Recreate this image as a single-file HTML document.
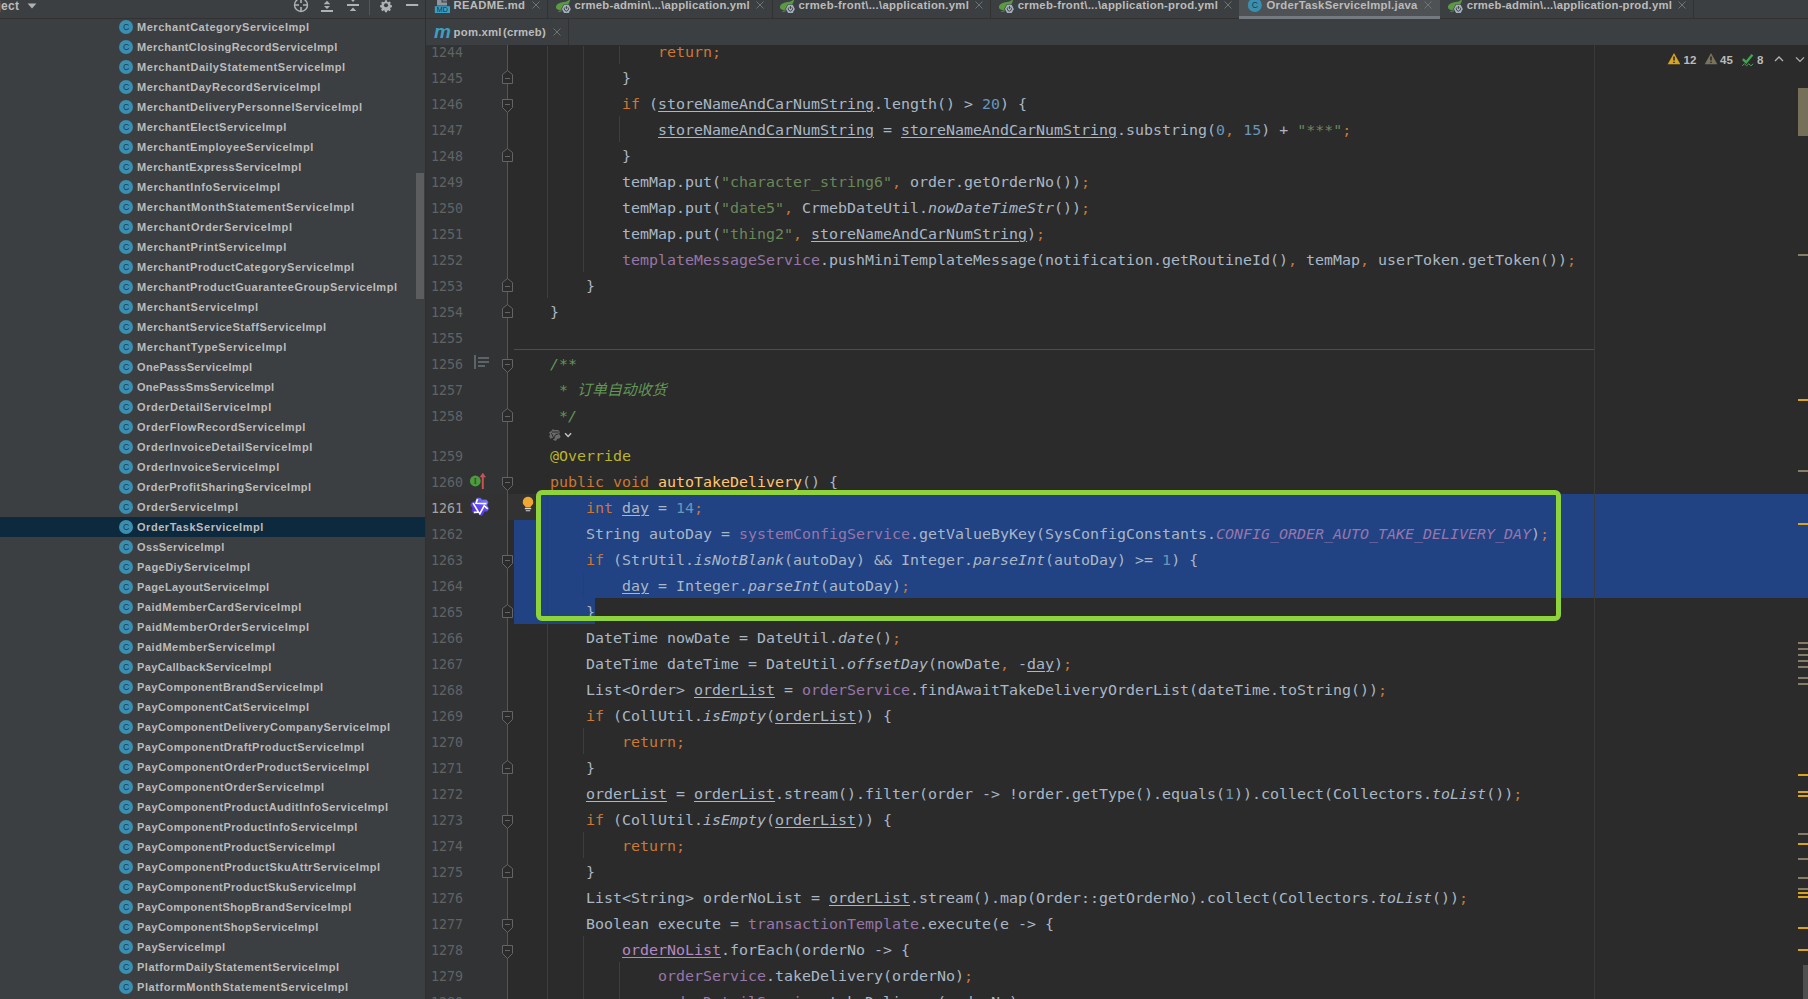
<!DOCTYPE html>
<html lang="zh">
<head>
<meta charset="utf-8">
<title>OrderTaskServiceImpl.java</title>
<style>
html,body{margin:0;padding:0;}
body{width:1808px;height:999px;overflow:hidden;position:relative;background:#2b2b2b;font-family:"Liberation Sans","Noto Sans CJK SC",sans-serif;}
.abs{position:absolute;}
#panel{position:absolute;left:0;top:0;width:425px;height:999px;background:#3c3f41;}
#phead{position:absolute;left:0;top:0;width:425px;height:18px;border-bottom:1px solid #323232;box-sizing:content-box;}
#tree .tr{position:absolute;left:0;width:425px;height:20px;}
#tree .tr.sel{background:#0d293e;}
#tree .ci{position:absolute;left:119px;top:3px;width:14px;height:14px;}
#tree .tn{position:absolute;left:137px;top:0;line-height:20px;font-size:11px;font-weight:bold;color:#bbbbbb;white-space:pre;letter-spacing:0px;}
#tabs1{position:absolute;left:425px;top:0;width:1383px;height:18px;background:#3c3f41;border-bottom:1px solid #323232;}
#tabs2{position:absolute;left:425px;top:19px;width:1383px;height:26px;background:#3c3f41;}
.tab{position:absolute;top:-1px;height:18px;white-space:pre;font-size:11.3px;font-weight:bold;color:#bbbbbb;line-height:12px;}
.tabx{position:absolute;width:8px;height:8px;}
.vsep{position:absolute;width:1px;background:#323232;}
#gutter{position:absolute;left:426px;top:45px;width:81px;height:954px;background:#313335;}
#foldline{position:absolute;left:507px;top:45px;width:1px;height:954px;background:#555555;}
#code .cl{position:absolute;left:514px;height:26px;line-height:26px;white-space:pre;font-family:"DejaVu Sans Mono","Liberation Mono","Noto Sans CJK SC",monospace;font-size:14.95px;letter-spacing:0.007px;color:#a9b7c6;}
#code .ln{position:absolute;left:425px;width:38px;margin-top:1px;text-align:right;height:26px;line-height:26px;font-family:"DejaVu Sans Mono","Liberation Mono",monospace;font-size:13.29px;color:#606366;}
#code .ln.cur{color:#a4a3a3;}
.k{color:#cc7832;}
.s{color:#6a8759;}
.n{color:#6897bb;}
.f{color:#9876aa;}
.sf{color:#9876aa;font-style:italic;}
.i{font-style:italic;}
.u{text-decoration:underline;text-decoration-thickness:1px;text-underline-offset:2px;}
.lv{color:#b389c5;text-decoration:underline;text-decoration-thickness:1px;text-underline-offset:2px;}
.c{color:#629755;font-style:italic;}
.a{color:#bbb529;}
.m{color:#ffc66d;}
.guide{position:absolute;width:1px;background:#3b3b3b;}
.selr{position:absolute;background:#214283;}
</style>
</head>
<body>
<div id="panel"></div>
<div id="phead"></div>
<div id="tabs1"></div>
<div id="tabs2"></div>
<!-- panel header -->
<div class="abs" id="proj" style="left:-23.5px;top:-3px;font-size:12px;font-weight:bold;color:#bbbbbb;line-height:18px;white-space:pre;letter-spacing:0.3px">Project</div>
<svg class="abs" style="left:26px;top:0" width="14" height="14" viewBox="26 0 14 14"><path d="M27.6 3.6H36.4L32 8.6Z" fill="#afb1b3"/></svg>
<svg class="abs" style="left:290px;top:0" width="135" height="18" viewBox="290 0 135 18">
<g stroke="#afb1b3" fill="none" stroke-width="1.4">
<circle cx="301" cy="5" r="6.5"/><path d="M301 -2V3M301 7V11.5M294.5 5H299M303 5H307.5" stroke-width="1.6"/>
</g>
<path d="M327 0.8L330.3 4.2H323.7Z M327 9L330 6H324Z" fill="#afb1b3"/><path d="M321 11H333" stroke="#afb1b3" stroke-width="2"/>
<path d="M347 5H359" stroke="#afb1b3" stroke-width="2"/><path d="M353 1.9L355.2 -0.4H350.8Z M353 7.5L356.3 10.9H349.7Z" fill="#afb1b3"/>
<path d="M369.5 0V15" stroke="#555555" stroke-width="1"/>
<g transform="translate(386 5.2) scale(0.76)"><path d="M-1.3 -6.4h2.6l.4 1.8 1.3.6 1.6-1 1.8 1.8-1 1.6.6 1.3 1.8.4v2.6l-1.8.4-.6 1.3 1 1.6-1.8 1.8-1.6-1-1.3.6-.4 1.8h-2.6l-.4-1.8-1.3-.6-1.6 1-1.8-1.8 1-1.6-.6-1.3-1.8-.4v-2.6l1.8-.4.6-1.3-1-1.6 1.8-1.8 1.6 1 1.3-.6z" fill="#afb1b3"/><circle cx="0" cy="0" r="2.7" fill="#3c3f41"/></g>
<path d="M406 5H418.2" stroke="#afb1b3" stroke-width="2"/>
</svg>
<!-- tree scrollbar -->
<div class="abs" style="left:416px;top:173px;width:8px;height:126px;background:#5b5d5f"></div>

<!-- editor tabs row 1 -->
<div class="abs" style="left:1239px;top:0;width:201px;height:18px;background:#4e5254"></div>
<div class="abs" style="left:1239px;top:16px;width:201px;height:3px;background:#747a80"></div>
<div class="vsep" style="left:547px;top:0;height:18px"></div>
<div class="vsep" style="left:772px;top:0;height:18px"></div>
<div class="vsep" style="left:990px;top:0;height:18px"></div>
<div class="vsep" style="left:1693px;top:0;height:18px"></div>
<div class="vsep" style="left:568px;top:19px;height:26px"></div>

<svg class="abs" style="left:434px;top:0" width="17" height="14" viewBox="434 0 17 14"><path d="M437 5.4V-1H441.5V2.6H447V5.4Z" fill="#9aa7b0" fill-opacity="0.85"/><path d="M442.6 -1H447V1.6H442.6Z" fill="#9aa7b0" fill-opacity="0.6"/><rect x="434.8" y="6.2" width="15.2" height="6.8" fill="#3a9fc7"/><text x="442.4" y="12.3" text-anchor="middle" font-family="Liberation Sans, sans-serif" font-size="7.2" fill="#1d3038">MD</text></svg>
<div class="tab" id="t1" style="left:453.5px;letter-spacing:0.306px">README.md</div>

<svg class="abs spr" style="left:555px;top:0" width="17" height="14" viewBox="0 0 17 14"><path d="M15.2 -1.5C12.6 2.8 7.4 1.6 3.6 3.4C0.5 5 0.3 8 2 9.3C4.8 10.8 9.2 9.6 11.4 7C13.2 4.6 15 2.4 15.2 -1.5Z" fill="#5a9b41"/><path d="M3.4 11.5L7.6 10.6" stroke="#5a9b41" stroke-width="0.9" fill="none"/><path d="M6.95 8.9L9.1 4.85H13.7L15.85 8.9L13.7 12.95H9.1Z" fill="#a4b1bb" stroke="#3c3f41" stroke-width="1.2" paint-order="stroke"/><path d="M10.1 7.3A2.1 2.1 0 1 0 12.7 7.3" fill="none" stroke="#3c3f41" stroke-width="0.95"/><path d="M11.4 6V8.9" stroke="#3c3f41" stroke-width="1"/></svg>
<div class="tab" id="t2" style="left:574.5px;letter-spacing:0.213px">crmeb-admin\...\application.yml</div>
<svg class="abs spr" style="left:779px;top:0" width="17" height="14" viewBox="0 0 17 14"><path d="M15.2 -1.5C12.6 2.8 7.4 1.6 3.6 3.4C0.5 5 0.3 8 2 9.3C4.8 10.8 9.2 9.6 11.4 7C13.2 4.6 15 2.4 15.2 -1.5Z" fill="#5a9b41"/><path d="M3.4 11.5L7.6 10.6" stroke="#5a9b41" stroke-width="0.9" fill="none"/><path d="M6.95 8.9L9.1 4.85H13.7L15.85 8.9L13.7 12.95H9.1Z" fill="#a4b1bb" stroke="#3c3f41" stroke-width="1.2" paint-order="stroke"/><path d="M10.1 7.3A2.1 2.1 0 1 0 12.7 7.3" fill="none" stroke="#3c3f41" stroke-width="0.95"/><path d="M11.4 6V8.9" stroke="#3c3f41" stroke-width="1"/></svg>
<div class="tab" id="t3" style="left:798.5px;letter-spacing:0.300px">crmeb-front\...\application.yml</div>
<svg class="abs spr" style="left:998px;top:0" width="17" height="14" viewBox="0 0 17 14"><path d="M15.2 -1.5C12.6 2.8 7.4 1.6 3.6 3.4C0.5 5 0.3 8 2 9.3C4.8 10.8 9.2 9.6 11.4 7C13.2 4.6 15 2.4 15.2 -1.5Z" fill="#5a9b41"/><path d="M3.4 11.5L7.6 10.6" stroke="#5a9b41" stroke-width="0.9" fill="none"/><path d="M6.95 8.9L9.1 4.85H13.7L15.85 8.9L13.7 12.95H9.1Z" fill="#a4b1bb" stroke="#3c3f41" stroke-width="1.2" paint-order="stroke"/><path d="M10.1 7.3A2.1 2.1 0 1 0 12.7 7.3" fill="none" stroke="#3c3f41" stroke-width="0.95"/><path d="M11.4 6V8.9" stroke="#3c3f41" stroke-width="1"/></svg>
<div class="tab" id="t4" style="left:1017.8px;letter-spacing:0.280px">crmeb-front\...\application-prod.yml</div>
<svg class="abs" style="left:1247px;top:-3px" width="15" height="16" viewBox="0 0 15 16"><circle cx="7.8" cy="8" r="7" fill="#3a8fb0"/><text x="7.9" y="11" text-anchor="middle" font-family="Liberation Sans, sans-serif" font-size="8.8" fill="#163f52">C</text></svg>
<div class="tab" id="t5" style="left:1266.5px;letter-spacing:0.275px">OrderTaskServiceImpl.java</div>
<svg class="abs spr" style="left:1447px;top:0" width="17" height="14" viewBox="0 0 17 14"><path d="M15.2 -1.5C12.6 2.8 7.4 1.6 3.6 3.4C0.5 5 0.3 8 2 9.3C4.8 10.8 9.2 9.6 11.4 7C13.2 4.6 15 2.4 15.2 -1.5Z" fill="#5a9b41"/><path d="M3.4 11.5L7.6 10.6" stroke="#5a9b41" stroke-width="0.9" fill="none"/><path d="M6.95 8.9L9.1 4.85H13.7L15.85 8.9L13.7 12.95H9.1Z" fill="#a4b1bb" stroke="#3c3f41" stroke-width="1.2" paint-order="stroke"/><path d="M10.1 7.3A2.1 2.1 0 1 0 12.7 7.3" fill="none" stroke="#3c3f41" stroke-width="0.95"/><path d="M11.4 6V8.9" stroke="#3c3f41" stroke-width="1"/></svg>
<div class="tab" id="t6" style="left:1466.7px;letter-spacing:0.211px">crmeb-admin\...\application-prod.yml</div>

<svg class="tabx" style="left:532px;top:1px" viewBox="0 0 8 8"><path d="M0.5 0.5L7.5 7.5M7.5 0.5L0.5 7.5" stroke="#6f7376" stroke-width="1" fill="none"/></svg>
<svg class="tabx" style="left:756px;top:1px" viewBox="0 0 8 8"><path d="M0.5 0.5L7.5 7.5M7.5 0.5L0.5 7.5" stroke="#6f7376" stroke-width="1" fill="none"/></svg>
<svg class="tabx" style="left:975px;top:1px" viewBox="0 0 8 8"><path d="M0.5 0.5L7.5 7.5M7.5 0.5L0.5 7.5" stroke="#6f7376" stroke-width="1" fill="none"/></svg>
<svg class="tabx" style="left:1224px;top:1px" viewBox="0 0 8 8"><path d="M0.5 0.5L7.5 7.5M7.5 0.5L0.5 7.5" stroke="#6f7376" stroke-width="1" fill="none"/></svg>
<svg class="tabx" style="left:1424px;top:1px" viewBox="0 0 8 8"><path d="M0.5 0.5L7.5 7.5M7.5 0.5L0.5 7.5" stroke="#6f7376" stroke-width="1" fill="none"/></svg>
<svg class="tabx" style="left:1678px;top:1px" viewBox="0 0 8 8"><path d="M0.5 0.5L7.5 7.5M7.5 0.5L0.5 7.5" stroke="#6f7376" stroke-width="1" fill="none"/></svg>
<svg class="tabx" style="left:553px;top:28px" viewBox="0 0 8 8"><path d="M0.5 0.5L7.5 7.5M7.5 0.5L0.5 7.5" stroke="#6f7376" stroke-width="1" fill="none"/></svg>

<!-- row 2 -->
<div class="abs" id="mv" style="left:434px;top:19px;height:26px;line-height:26px;font-family:'Liberation Sans',sans-serif;font-size:19px;font-weight:bold;font-style:italic;color:#3b9fc6;">m</div>
<div class="tab" id="t7" style="left:453.6px;top:26px;letter-spacing:0.243px">pom.xml<span style="letter-spacing:-2px"> </span>(crmeb)</div>

<div id="gutter"></div>
<div class="abs" style="left:425px;top:0;width:1px;height:999px;background:#2e3031"></div>
<div id="foldline"></div>
<!-- caret row -->
<div class="abs" style="left:426px;top:494px;width:81px;height:26px;background:#323232"></div>
<div class="abs" style="left:508px;top:494px;width:30px;height:26px;background:#323232"></div>
<!-- selection -->
<div class="selr" style="left:538px;top:494px;width:1270px;height:26px"></div>
<div class="selr" style="left:514px;top:520px;width:1294px;height:78px"></div>
<div class="selr" style="left:514px;top:598px;width:81px;height:26px"></div>
<!-- method separator -->
<div class="abs" style="left:514px;top:349px;width:1080px;height:1px;background:#4d4d4d"></div>
<!-- right margin -->
<div class="abs" style="left:1594px;top:45px;width:1px;height:954px;background:#3a3a3a"></div>
<div id="tree">
<div class="tr" style="top:17px"><svg class="ci" viewBox="0 0 14 14"><circle cx="7" cy="7" r="7" fill="#3a8fb0"/><text x="7.1" y="10" text-anchor="middle" font-family="Liberation Sans, sans-serif" font-size="8.8" fill="#163f52">C</text></svg><span class="tn" style="letter-spacing:0.529px">MerchantCategoryServiceImpl</span></div>
<div class="tr" style="top:37px"><svg class="ci" viewBox="0 0 14 14"><circle cx="7" cy="7" r="7" fill="#3a8fb0"/><text x="7.1" y="10" text-anchor="middle" font-family="Liberation Sans, sans-serif" font-size="8.8" fill="#163f52">C</text></svg><span class="tn" style="letter-spacing:0.365px">MerchantClosingRecordServiceImpl</span></div>
<div class="tr" style="top:57px"><svg class="ci" viewBox="0 0 14 14"><circle cx="7" cy="7" r="7" fill="#3a8fb0"/><text x="7.1" y="10" text-anchor="middle" font-family="Liberation Sans, sans-serif" font-size="8.8" fill="#163f52">C</text></svg><span class="tn" style="letter-spacing:0.564px">MerchantDailyStatementServiceImpl</span></div>
<div class="tr" style="top:77px"><svg class="ci" viewBox="0 0 14 14"><circle cx="7" cy="7" r="7" fill="#3a8fb0"/><text x="7.1" y="10" text-anchor="middle" font-family="Liberation Sans, sans-serif" font-size="8.8" fill="#163f52">C</text></svg><span class="tn" style="letter-spacing:0.539px">MerchantDayRecordServiceImpl</span></div>
<div class="tr" style="top:97px"><svg class="ci" viewBox="0 0 14 14"><circle cx="7" cy="7" r="7" fill="#3a8fb0"/><text x="7.1" y="10" text-anchor="middle" font-family="Liberation Sans, sans-serif" font-size="8.8" fill="#163f52">C</text></svg><span class="tn" style="letter-spacing:0.527px">MerchantDeliveryPersonnelServiceImpl</span></div>
<div class="tr" style="top:117px"><svg class="ci" viewBox="0 0 14 14"><circle cx="7" cy="7" r="7" fill="#3a8fb0"/><text x="7.1" y="10" text-anchor="middle" font-family="Liberation Sans, sans-serif" font-size="8.8" fill="#163f52">C</text></svg><span class="tn" style="letter-spacing:0.532px">MerchantElectServiceImpl</span></div>
<div class="tr" style="top:137px"><svg class="ci" viewBox="0 0 14 14"><circle cx="7" cy="7" r="7" fill="#3a8fb0"/><text x="7.1" y="10" text-anchor="middle" font-family="Liberation Sans, sans-serif" font-size="8.8" fill="#163f52">C</text></svg><span class="tn" style="letter-spacing:0.526px">MerchantEmployeeServiceImpl</span></div>
<div class="tr" style="top:157px"><svg class="ci" viewBox="0 0 14 14"><circle cx="7" cy="7" r="7" fill="#3a8fb0"/><text x="7.1" y="10" text-anchor="middle" font-family="Liberation Sans, sans-serif" font-size="8.8" fill="#163f52">C</text></svg><span class="tn" style="letter-spacing:0.429px">MerchantExpressServiceImpl</span></div>
<div class="tr" style="top:177px"><svg class="ci" viewBox="0 0 14 14"><circle cx="7" cy="7" r="7" fill="#3a8fb0"/><text x="7.1" y="10" text-anchor="middle" font-family="Liberation Sans, sans-serif" font-size="8.8" fill="#163f52">C</text></svg><span class="tn" style="letter-spacing:0.553px">MerchantInfoServiceImpl</span></div>
<div class="tr" style="top:197px"><svg class="ci" viewBox="0 0 14 14"><circle cx="7" cy="7" r="7" fill="#3a8fb0"/><text x="7.1" y="10" text-anchor="middle" font-family="Liberation Sans, sans-serif" font-size="8.8" fill="#163f52">C</text></svg><span class="tn" style="letter-spacing:0.630px">MerchantMonthStatementServiceImpl</span></div>
<div class="tr" style="top:217px"><svg class="ci" viewBox="0 0 14 14"><circle cx="7" cy="7" r="7" fill="#3a8fb0"/><text x="7.1" y="10" text-anchor="middle" font-family="Liberation Sans, sans-serif" font-size="8.8" fill="#163f52">C</text></svg><span class="tn" style="letter-spacing:0.625px">MerchantOrderServiceImpl</span></div>
<div class="tr" style="top:237px"><svg class="ci" viewBox="0 0 14 14"><circle cx="7" cy="7" r="7" fill="#3a8fb0"/><text x="7.1" y="10" text-anchor="middle" font-family="Liberation Sans, sans-serif" font-size="8.8" fill="#163f52">C</text></svg><span class="tn" style="letter-spacing:0.586px">MerchantPrintServiceImpl</span></div>
<div class="tr" style="top:257px"><svg class="ci" viewBox="0 0 14 14"><circle cx="7" cy="7" r="7" fill="#3a8fb0"/><text x="7.1" y="10" text-anchor="middle" font-family="Liberation Sans, sans-serif" font-size="8.8" fill="#163f52">C</text></svg><span class="tn" style="letter-spacing:0.518px">MerchantProductCategoryServiceImpl</span></div>
<div class="tr" style="top:277px"><svg class="ci" viewBox="0 0 14 14"><circle cx="7" cy="7" r="7" fill="#3a8fb0"/><text x="7.1" y="10" text-anchor="middle" font-family="Liberation Sans, sans-serif" font-size="8.8" fill="#163f52">C</text></svg><span class="tn" style="letter-spacing:0.522px">MerchantProductGuaranteeGroupServiceImpl</span></div>
<div class="tr" style="top:297px"><svg class="ci" viewBox="0 0 14 14"><circle cx="7" cy="7" r="7" fill="#3a8fb0"/><text x="7.1" y="10" text-anchor="middle" font-family="Liberation Sans, sans-serif" font-size="8.8" fill="#163f52">C</text></svg><span class="tn" style="letter-spacing:0.580px">MerchantServiceImpl</span></div>
<div class="tr" style="top:317px"><svg class="ci" viewBox="0 0 14 14"><circle cx="7" cy="7" r="7" fill="#3a8fb0"/><text x="7.1" y="10" text-anchor="middle" font-family="Liberation Sans, sans-serif" font-size="8.8" fill="#163f52">C</text></svg><span class="tn" style="letter-spacing:0.495px">MerchantServiceStaffServiceImpl</span></div>
<div class="tr" style="top:337px"><svg class="ci" viewBox="0 0 14 14"><circle cx="7" cy="7" r="7" fill="#3a8fb0"/><text x="7.1" y="10" text-anchor="middle" font-family="Liberation Sans, sans-serif" font-size="8.8" fill="#163f52">C</text></svg><span class="tn" style="letter-spacing:0.622px">MerchantTypeServiceImpl</span></div>
<div class="tr" style="top:357px"><svg class="ci" viewBox="0 0 14 14"><circle cx="7" cy="7" r="7" fill="#3a8fb0"/><text x="7.1" y="10" text-anchor="middle" font-family="Liberation Sans, sans-serif" font-size="8.8" fill="#163f52">C</text></svg><span class="tn" style="letter-spacing:0.368px">OnePassServiceImpl</span></div>
<div class="tr" style="top:377px"><svg class="ci" viewBox="0 0 14 14"><circle cx="7" cy="7" r="7" fill="#3a8fb0"/><text x="7.1" y="10" text-anchor="middle" font-family="Liberation Sans, sans-serif" font-size="8.8" fill="#163f52">C</text></svg><span class="tn" style="letter-spacing:0.251px">OnePassSmsServiceImpl</span></div>
<div class="tr" style="top:397px"><svg class="ci" viewBox="0 0 14 14"><circle cx="7" cy="7" r="7" fill="#3a8fb0"/><text x="7.1" y="10" text-anchor="middle" font-family="Liberation Sans, sans-serif" font-size="8.8" fill="#163f52">C</text></svg><span class="tn" style="letter-spacing:0.597px">OrderDetailServiceImpl</span></div>
<div class="tr" style="top:417px"><svg class="ci" viewBox="0 0 14 14"><circle cx="7" cy="7" r="7" fill="#3a8fb0"/><text x="7.1" y="10" text-anchor="middle" font-family="Liberation Sans, sans-serif" font-size="8.8" fill="#163f52">C</text></svg><span class="tn" style="letter-spacing:0.545px">OrderFlowRecordServiceImpl</span></div>
<div class="tr" style="top:437px"><svg class="ci" viewBox="0 0 14 14"><circle cx="7" cy="7" r="7" fill="#3a8fb0"/><text x="7.1" y="10" text-anchor="middle" font-family="Liberation Sans, sans-serif" font-size="8.8" fill="#163f52">C</text></svg><span class="tn" style="letter-spacing:0.561px">OrderInvoiceDetailServiceImpl</span></div>
<div class="tr" style="top:457px"><svg class="ci" viewBox="0 0 14 14"><circle cx="7" cy="7" r="7" fill="#3a8fb0"/><text x="7.1" y="10" text-anchor="middle" font-family="Liberation Sans, sans-serif" font-size="8.8" fill="#163f52">C</text></svg><span class="tn" style="letter-spacing:0.572px">OrderInvoiceServiceImpl</span></div>
<div class="tr" style="top:477px"><svg class="ci" viewBox="0 0 14 14"><circle cx="7" cy="7" r="7" fill="#3a8fb0"/><text x="7.1" y="10" text-anchor="middle" font-family="Liberation Sans, sans-serif" font-size="8.8" fill="#163f52">C</text></svg><span class="tn" style="letter-spacing:0.454px">OrderProfitSharingServiceImpl</span></div>
<div class="tr" style="top:497px"><svg class="ci" viewBox="0 0 14 14"><circle cx="7" cy="7" r="7" fill="#3a8fb0"/><text x="7.1" y="10" text-anchor="middle" font-family="Liberation Sans, sans-serif" font-size="8.8" fill="#163f52">C</text></svg><span class="tn" style="letter-spacing:0.619px">OrderServiceImpl</span></div>
<div class="tr sel" style="top:517px"><svg class="ci" viewBox="0 0 14 14"><circle cx="7" cy="7" r="7" fill="#3a8fb0"/><text x="7.1" y="10" text-anchor="middle" font-family="Liberation Sans, sans-serif" font-size="8.8" fill="#163f52">C</text></svg><span class="tn" style="letter-spacing:0.544px">OrderTaskServiceImpl</span></div>
<div class="tr" style="top:537px"><svg class="ci" viewBox="0 0 14 14"><circle cx="7" cy="7" r="7" fill="#3a8fb0"/><text x="7.1" y="10" text-anchor="middle" font-family="Liberation Sans, sans-serif" font-size="8.8" fill="#163f52">C</text></svg><span class="tn" style="letter-spacing:0.357px">OssServiceImpl</span></div>
<div class="tr" style="top:557px"><svg class="ci" viewBox="0 0 14 14"><circle cx="7" cy="7" r="7" fill="#3a8fb0"/><text x="7.1" y="10" text-anchor="middle" font-family="Liberation Sans, sans-serif" font-size="8.8" fill="#163f52">C</text></svg><span class="tn" style="letter-spacing:0.466px">PageDiyServiceImpl</span></div>
<div class="tr" style="top:577px"><svg class="ci" viewBox="0 0 14 14"><circle cx="7" cy="7" r="7" fill="#3a8fb0"/><text x="7.1" y="10" text-anchor="middle" font-family="Liberation Sans, sans-serif" font-size="8.8" fill="#163f52">C</text></svg><span class="tn" style="letter-spacing:0.400px">PageLayoutServiceImpl</span></div>
<div class="tr" style="top:597px"><svg class="ci" viewBox="0 0 14 14"><circle cx="7" cy="7" r="7" fill="#3a8fb0"/><text x="7.1" y="10" text-anchor="middle" font-family="Liberation Sans, sans-serif" font-size="8.8" fill="#163f52">C</text></svg><span class="tn" style="letter-spacing:0.499px">PaidMemberCardServiceImpl</span></div>
<div class="tr" style="top:617px"><svg class="ci" viewBox="0 0 14 14"><circle cx="7" cy="7" r="7" fill="#3a8fb0"/><text x="7.1" y="10" text-anchor="middle" font-family="Liberation Sans, sans-serif" font-size="8.8" fill="#163f52">C</text></svg><span class="tn" style="letter-spacing:0.599px">PaidMemberOrderServiceImpl</span></div>
<div class="tr" style="top:637px"><svg class="ci" viewBox="0 0 14 14"><circle cx="7" cy="7" r="7" fill="#3a8fb0"/><text x="7.1" y="10" text-anchor="middle" font-family="Liberation Sans, sans-serif" font-size="8.8" fill="#163f52">C</text></svg><span class="tn" style="letter-spacing:0.546px">PaidMemberServiceImpl</span></div>
<div class="tr" style="top:657px"><svg class="ci" viewBox="0 0 14 14"><circle cx="7" cy="7" r="7" fill="#3a8fb0"/><text x="7.1" y="10" text-anchor="middle" font-family="Liberation Sans, sans-serif" font-size="8.8" fill="#163f52">C</text></svg><span class="tn" style="letter-spacing:0.363px">PayCallbackServiceImpl</span></div>
<div class="tr" style="top:677px"><svg class="ci" viewBox="0 0 14 14"><circle cx="7" cy="7" r="7" fill="#3a8fb0"/><text x="7.1" y="10" text-anchor="middle" font-family="Liberation Sans, sans-serif" font-size="8.8" fill="#163f52">C</text></svg><span class="tn" style="letter-spacing:0.440px">PayComponentBrandServiceImpl</span></div>
<div class="tr" style="top:697px"><svg class="ci" viewBox="0 0 14 14"><circle cx="7" cy="7" r="7" fill="#3a8fb0"/><text x="7.1" y="10" text-anchor="middle" font-family="Liberation Sans, sans-serif" font-size="8.8" fill="#163f52">C</text></svg><span class="tn" style="letter-spacing:0.478px">PayComponentCatServiceImpl</span></div>
<div class="tr" style="top:717px"><svg class="ci" viewBox="0 0 14 14"><circle cx="7" cy="7" r="7" fill="#3a8fb0"/><text x="7.1" y="10" text-anchor="middle" font-family="Liberation Sans, sans-serif" font-size="8.8" fill="#163f52">C</text></svg><span class="tn" style="letter-spacing:0.479px">PayComponentDeliveryCompanyServiceImpl</span></div>
<div class="tr" style="top:737px"><svg class="ci" viewBox="0 0 14 14"><circle cx="7" cy="7" r="7" fill="#3a8fb0"/><text x="7.1" y="10" text-anchor="middle" font-family="Liberation Sans, sans-serif" font-size="8.8" fill="#163f52">C</text></svg><span class="tn" style="letter-spacing:0.513px">PayComponentDraftProductServiceImpl</span></div>
<div class="tr" style="top:757px"><svg class="ci" viewBox="0 0 14 14"><circle cx="7" cy="7" r="7" fill="#3a8fb0"/><text x="7.1" y="10" text-anchor="middle" font-family="Liberation Sans, sans-serif" font-size="8.8" fill="#163f52">C</text></svg><span class="tn" style="letter-spacing:0.531px">PayComponentOrderProductServiceImpl</span></div>
<div class="tr" style="top:777px"><svg class="ci" viewBox="0 0 14 14"><circle cx="7" cy="7" r="7" fill="#3a8fb0"/><text x="7.1" y="10" text-anchor="middle" font-family="Liberation Sans, sans-serif" font-size="8.8" fill="#163f52">C</text></svg><span class="tn" style="letter-spacing:0.545px">PayComponentOrderServiceImpl</span></div>
<div class="tr" style="top:797px"><svg class="ci" viewBox="0 0 14 14"><circle cx="7" cy="7" r="7" fill="#3a8fb0"/><text x="7.1" y="10" text-anchor="middle" font-family="Liberation Sans, sans-serif" font-size="8.8" fill="#163f52">C</text></svg><span class="tn" style="letter-spacing:0.496px">PayComponentProductAuditInfoServiceImpl</span></div>
<div class="tr" style="top:817px"><svg class="ci" viewBox="0 0 14 14"><circle cx="7" cy="7" r="7" fill="#3a8fb0"/><text x="7.1" y="10" text-anchor="middle" font-family="Liberation Sans, sans-serif" font-size="8.8" fill="#163f52">C</text></svg><span class="tn" style="letter-spacing:0.486px">PayComponentProductInfoServiceImpl</span></div>
<div class="tr" style="top:837px"><svg class="ci" viewBox="0 0 14 14"><circle cx="7" cy="7" r="7" fill="#3a8fb0"/><text x="7.1" y="10" text-anchor="middle" font-family="Liberation Sans, sans-serif" font-size="8.8" fill="#163f52">C</text></svg><span class="tn" style="letter-spacing:0.486px">PayComponentProductServiceImpl</span></div>
<div class="tr" style="top:857px"><svg class="ci" viewBox="0 0 14 14"><circle cx="7" cy="7" r="7" fill="#3a8fb0"/><text x="7.1" y="10" text-anchor="middle" font-family="Liberation Sans, sans-serif" font-size="8.8" fill="#163f52">C</text></svg><span class="tn" style="letter-spacing:0.538px">PayComponentProductSkuAttrServiceImpl</span></div>
<div class="tr" style="top:877px"><svg class="ci" viewBox="0 0 14 14"><circle cx="7" cy="7" r="7" fill="#3a8fb0"/><text x="7.1" y="10" text-anchor="middle" font-family="Liberation Sans, sans-serif" font-size="8.8" fill="#163f52">C</text></svg><span class="tn" style="letter-spacing:0.463px">PayComponentProductSkuServiceImpl</span></div>
<div class="tr" style="top:897px"><svg class="ci" viewBox="0 0 14 14"><circle cx="7" cy="7" r="7" fill="#3a8fb0"/><text x="7.1" y="10" text-anchor="middle" font-family="Liberation Sans, sans-serif" font-size="8.8" fill="#163f52">C</text></svg><span class="tn" style="letter-spacing:0.403px">PayComponentShopBrandServiceImpl</span></div>
<div class="tr" style="top:917px"><svg class="ci" viewBox="0 0 14 14"><circle cx="7" cy="7" r="7" fill="#3a8fb0"/><text x="7.1" y="10" text-anchor="middle" font-family="Liberation Sans, sans-serif" font-size="8.8" fill="#163f52">C</text></svg><span class="tn" style="letter-spacing:0.437px">PayComponentShopServiceImpl</span></div>
<div class="tr" style="top:937px"><svg class="ci" viewBox="0 0 14 14"><circle cx="7" cy="7" r="7" fill="#3a8fb0"/><text x="7.1" y="10" text-anchor="middle" font-family="Liberation Sans, sans-serif" font-size="8.8" fill="#163f52">C</text></svg><span class="tn" style="letter-spacing:0.512px">PayServiceImpl</span></div>
<div class="tr" style="top:957px"><svg class="ci" viewBox="0 0 14 14"><circle cx="7" cy="7" r="7" fill="#3a8fb0"/><text x="7.1" y="10" text-anchor="middle" font-family="Liberation Sans, sans-serif" font-size="8.8" fill="#163f52">C</text></svg><span class="tn" style="letter-spacing:0.504px">PlatformDailyStatementServiceImpl</span></div>
<div class="tr" style="top:977px"><svg class="ci" viewBox="0 0 14 14"><circle cx="7" cy="7" r="7" fill="#3a8fb0"/><text x="7.1" y="10" text-anchor="middle" font-family="Liberation Sans, sans-serif" font-size="8.8" fill="#163f52">C</text></svg><span class="tn" style="letter-spacing:0.580px">PlatformMonthStatementServiceImpl</span></div>
</div>
<svg class="abs" style="left:0;top:0" width="1808" height="999" viewBox="0 0 1808 999">
<line x1="547.5" y1="46" x2="547.5" y2="298" stroke="#3d3d3d" stroke-width="1"/>
<line x1="583.5" y1="46" x2="583.5" y2="272" stroke="#3d3d3d" stroke-width="1"/>
<line x1="619.5" y1="46" x2="619.5" y2="64" stroke="#3d3d3d" stroke-width="1"/>
<line x1="619.5" y1="116" x2="619.5" y2="142" stroke="#3d3d3d" stroke-width="1"/>
<line x1="547.5" y1="494" x2="547.5" y2="999" stroke="#3d3d3d" stroke-width="1"/>
<line x1="583.5" y1="572" x2="583.5" y2="598" stroke="#3d3d3d" stroke-width="1"/>
<line x1="583.5" y1="728" x2="583.5" y2="754" stroke="#3d3d3d" stroke-width="1"/>
<line x1="583.5" y1="832" x2="583.5" y2="858" stroke="#3d3d3d" stroke-width="1"/>
<line x1="583.5" y1="936" x2="583.5" y2="999" stroke="#3d3d3d" stroke-width="1"/>
<line x1="619.5" y1="962" x2="619.5" y2="999" stroke="#3d3d3d" stroke-width="1"/>
</svg><div id="code">
<div class="ln" style="top:39px">1244</div>
<div class="cl" style="top:39px">                <span class="k">return;</span></div>
<div class="ln" style="top:65px">1245</div>
<div class="cl" style="top:65px">            }</div>
<div class="ln" style="top:91px">1246</div>
<div class="cl" style="top:91px">            <span class="k">if</span> (<span class="u">storeNameAndCarNumString</span>.length() &gt; <span class="n">20</span>) {</div>
<div class="ln" style="top:117px">1247</div>
<div class="cl" style="top:117px">                <span class="u">storeNameAndCarNumString</span> = <span class="u">storeNameAndCarNumString</span>.substring(<span class="n">0</span><span class="k">,</span> <span class="n">15</span>) + <span class="s">&quot;***&quot;</span><span class="k">;</span></div>
<div class="ln" style="top:143px">1248</div>
<div class="cl" style="top:143px">            }</div>
<div class="ln" style="top:169px">1249</div>
<div class="cl" style="top:169px">            temMap.put(<span class="s">&quot;character_string6&quot;</span><span class="k">,</span> order.getOrderNo())<span class="k">;</span></div>
<div class="ln" style="top:195px">1250</div>
<div class="cl" style="top:195px">            temMap.put(<span class="s">&quot;date5&quot;</span><span class="k">,</span> CrmebDateUtil.<span class="i">nowDateTimeStr</span>())<span class="k">;</span></div>
<div class="ln" style="top:221px">1251</div>
<div class="cl" style="top:221px">            temMap.put(<span class="s">&quot;thing2&quot;</span><span class="k">,</span> <span class="u">storeNameAndCarNumString</span>)<span class="k">;</span></div>
<div class="ln" style="top:247px">1252</div>
<div class="cl" style="top:247px">            <span class="f">templateMessageService</span>.pushMiniTemplateMessage(notification.getRoutineId()<span class="k">,</span> temMap<span class="k">,</span> userToken.getToken())<span class="k">;</span></div>
<div class="ln" style="top:273px">1253</div>
<div class="cl" style="top:273px">        }</div>
<div class="ln" style="top:299px">1254</div>
<div class="cl" style="top:299px">    }</div>
<div class="ln" style="top:325px">1255</div>
<div class="cl" style="top:325px"></div>
<div class="ln" style="top:351px">1256</div>
<div class="cl" style="top:351px">    <span class="c">/**</span></div>
<div class="ln" style="top:377px">1257</div>
<div class="cl" style="top:377px">     <span class="c">* 订单自动收货</span></div>
<div class="ln" style="top:403px">1258</div>
<div class="cl" style="top:403px">     <span class="c">*/</span></div>
<div class="ln" style="top:443px">1259</div>
<div class="cl" style="top:443px">    <span class="a">@Override</span></div>
<div class="ln" style="top:469px">1260</div>
<div class="cl" style="top:469px">    <span class="k">public void</span> <span class="m">autoTakeDelivery</span>() {</div>
<div class="ln cur" style="top:495px">1261</div>
<div class="cl" style="top:495px">        <span class="k">int</span> <span class="u">day</span> = <span class="n">14</span><span class="k">;</span></div>
<div class="ln" style="top:521px">1262</div>
<div class="cl" style="top:521px">        String autoDay = <span class="f">systemConfigService</span>.getValueByKey(SysConfigConstants.<span class="sf">CONFIG_ORDER_AUTO_TAKE_DELIVERY_DAY</span>)<span class="k">;</span></div>
<div class="ln" style="top:547px">1263</div>
<div class="cl" style="top:547px">        <span class="k">if</span> (StrUtil.<span class="i">isNotBlank</span>(autoDay) &amp;&amp; Integer.<span class="i">parseInt</span>(autoDay) &gt;= <span class="n">1</span>) {</div>
<div class="ln" style="top:573px">1264</div>
<div class="cl" style="top:573px">            <span class="u">day</span> = Integer.<span class="i">parseInt</span>(autoDay)<span class="k">;</span></div>
<div class="ln" style="top:599px">1265</div>
<div class="cl" style="top:599px">        }</div>
<div class="ln" style="top:625px">1266</div>
<div class="cl" style="top:625px">        DateTime nowDate = DateUtil.<span class="i">date</span>()<span class="k">;</span></div>
<div class="ln" style="top:651px">1267</div>
<div class="cl" style="top:651px">        DateTime dateTime = DateUtil.<span class="i">offsetDay</span>(nowDate<span class="k">,</span> -<span class="u">day</span>)<span class="k">;</span></div>
<div class="ln" style="top:677px">1268</div>
<div class="cl" style="top:677px">        List&lt;Order&gt; <span class="u">orderList</span> = <span class="f">orderService</span>.findAwaitTakeDeliveryOrderList(dateTime.toString())<span class="k">;</span></div>
<div class="ln" style="top:703px">1269</div>
<div class="cl" style="top:703px">        <span class="k">if</span> (CollUtil.<span class="i">isEmpty</span>(<span class="u">orderList</span>)) {</div>
<div class="ln" style="top:729px">1270</div>
<div class="cl" style="top:729px">            <span class="k">return;</span></div>
<div class="ln" style="top:755px">1271</div>
<div class="cl" style="top:755px">        }</div>
<div class="ln" style="top:781px">1272</div>
<div class="cl" style="top:781px">        <span class="u">orderList</span> = <span class="u">orderList</span>.stream().filter(order -&gt; !order.getType().equals(<span class="n">1</span>)).collect(Collectors.<span class="i">toList</span>())<span class="k">;</span></div>
<div class="ln" style="top:807px">1273</div>
<div class="cl" style="top:807px">        <span class="k">if</span> (CollUtil.<span class="i">isEmpty</span>(<span class="u">orderList</span>)) {</div>
<div class="ln" style="top:833px">1274</div>
<div class="cl" style="top:833px">            <span class="k">return;</span></div>
<div class="ln" style="top:859px">1275</div>
<div class="cl" style="top:859px">        }</div>
<div class="ln" style="top:885px">1276</div>
<div class="cl" style="top:885px">        List&lt;String&gt; orderNoList = <span class="u">orderList</span>.stream().map(Order::getOrderNo).collect(Collectors.<span class="i">toList</span>())<span class="k">;</span></div>
<div class="ln" style="top:911px">1277</div>
<div class="cl" style="top:911px">        Boolean execute = <span class="f">transactionTemplate</span>.execute(e -&gt; {</div>
<div class="ln" style="top:937px">1278</div>
<div class="cl" style="top:937px">            <span class="lv">orderNoList</span>.forEach(orderNo -&gt; {</div>
<div class="ln" style="top:963px">1279</div>
<div class="cl" style="top:963px">                <span class="f">orderService</span>.takeDelivery(orderNo)<span class="k">;</span></div>
<div class="ln" style="top:989px">1280</div>
<div class="cl" style="top:989px">                <span class="f">orderDetailService</span>.takeDelivery(orderNo)<span class="k">;</span></div>
</div>
<svg class="abs" style="left:495px;top:0" width="26" height="999" viewBox="495 0 26 999">
<path d="M502.5 83.5 V74.5 L507.5 70.5 L512.5 74.5 V83.5 Z" fill="#2b2b2b" stroke="#646464" stroke-width="1"/>
<path d="M505 78.5 H510" stroke="#646464" stroke-width="1"/>
<path d="M502.5 161.5 V152.5 L507.5 148.5 L512.5 152.5 V161.5 Z" fill="#2b2b2b" stroke="#646464" stroke-width="1"/>
<path d="M505 156.5 H510" stroke="#646464" stroke-width="1"/>
<path d="M502.5 291.5 V282.5 L507.5 278.5 L512.5 282.5 V291.5 Z" fill="#2b2b2b" stroke="#646464" stroke-width="1"/>
<path d="M505 286.5 H510" stroke="#646464" stroke-width="1"/>
<path d="M502.5 317.5 V308.5 L507.5 304.5 L512.5 308.5 V317.5 Z" fill="#2b2b2b" stroke="#646464" stroke-width="1"/>
<path d="M505 312.5 H510" stroke="#646464" stroke-width="1"/>
<path d="M502.5 421.5 V412.5 L507.5 408.5 L512.5 412.5 V421.5 Z" fill="#2b2b2b" stroke="#646464" stroke-width="1"/>
<path d="M505 416.5 H510" stroke="#646464" stroke-width="1"/>
<path d="M502.5 617.5 V608.5 L507.5 604.5 L512.5 608.5 V617.5 Z" fill="#2b2b2b" stroke="#646464" stroke-width="1"/>
<path d="M505 612.5 H510" stroke="#646464" stroke-width="1"/>
<path d="M502.5 773.5 V764.5 L507.5 760.5 L512.5 764.5 V773.5 Z" fill="#2b2b2b" stroke="#646464" stroke-width="1"/>
<path d="M505 768.5 H510" stroke="#646464" stroke-width="1"/>
<path d="M502.5 877.5 V868.5 L507.5 864.5 L512.5 868.5 V877.5 Z" fill="#2b2b2b" stroke="#646464" stroke-width="1"/>
<path d="M505 872.5 H510" stroke="#646464" stroke-width="1"/>
<path d="M502.5 99.5 V107.5 L507.5 112.5 L512.5 107.5 V99.5 Z" fill="#2b2b2b" stroke="#646464" stroke-width="1"/>
<path d="M505 104.5 H510" stroke="#646464" stroke-width="1"/>
<path d="M502.5 359.5 V367.5 L507.5 372.5 L512.5 367.5 V359.5 Z" fill="#2b2b2b" stroke="#646464" stroke-width="1"/>
<path d="M505 364.5 H510" stroke="#646464" stroke-width="1"/>
<path d="M502.5 477.5 V485.5 L507.5 490.5 L512.5 485.5 V477.5 Z" fill="#2b2b2b" stroke="#646464" stroke-width="1"/>
<path d="M505 482.5 H510" stroke="#646464" stroke-width="1"/>
<path d="M502.5 555.5 V563.5 L507.5 568.5 L512.5 563.5 V555.5 Z" fill="#2b2b2b" stroke="#646464" stroke-width="1"/>
<path d="M505 560.5 H510" stroke="#646464" stroke-width="1"/>
<path d="M502.5 711.5 V719.5 L507.5 724.5 L512.5 719.5 V711.5 Z" fill="#2b2b2b" stroke="#646464" stroke-width="1"/>
<path d="M505 716.5 H510" stroke="#646464" stroke-width="1"/>
<path d="M502.5 815.5 V823.5 L507.5 828.5 L512.5 823.5 V815.5 Z" fill="#2b2b2b" stroke="#646464" stroke-width="1"/>
<path d="M505 820.5 H510" stroke="#646464" stroke-width="1"/>
<path d="M502.5 919.5 V927.5 L507.5 932.5 L512.5 927.5 V919.5 Z" fill="#2b2b2b" stroke="#646464" stroke-width="1"/>
<path d="M505 924.5 H510" stroke="#646464" stroke-width="1"/>
<path d="M502.5 945.5 V953.5 L507.5 958.5 L512.5 953.5 V945.5 Z" fill="#2b2b2b" stroke="#646464" stroke-width="1"/>
<path d="M505 950.5 H510" stroke="#646464" stroke-width="1"/>
</svg>
<svg class="abs" style="left:472px;top:353px" width="20" height="20" viewBox="472 353 20 20"><path d="M475 355V369" stroke="#5d6468" stroke-width="2" fill="none"/><path d="M478 358H489M478 362H489M478 366H485" stroke="#5d6468" stroke-width="2" fill="none"/></svg>
<svg class="abs" style="left:468px;top:471px" width="22" height="20" viewBox="468 471 22 20"><circle cx="475.3" cy="481" r="5.4" fill="#4d9a3f"/><text x="475.3" y="484.3" text-anchor="middle" font-family="Liberation Serif, serif" font-size="9" font-weight="bold" fill="#2c5a26">I</text><path d="M482.8 489V476" stroke="#c75450" stroke-width="2" fill="none"/><path d="M479.6 477.3L482.8 472.8L486 477.3Z" fill="#c75450"/></svg>
<svg class="abs" style="left:470px;top:497px" width="20" height="20" viewBox="0 0 20 20"><defs><linearGradient id="pg" x1="0.2" y1="1" x2="0.8" y2="0"><stop offset="0" stop-color="#5526ee"/><stop offset="0.55" stop-color="#5f4af2"/><stop offset="1" stop-color="#8088fa"/></linearGradient></defs><path d="M7.2 1.2L10.6 1.4L11.4 3L16.6 3.2L17.9 5.6L16.8 7.9L18.6 11.8L17.3 13.9L14.2 14.2L12.1 18.3L9.5 18.1L8.2 16.3L3.8 16.3L2 13.9L3 11.6L0.9 7.9L2.2 5.3L5.1 5.1Z" fill="url(#pg)" stroke="url(#pg)" stroke-width="0.8" stroke-linejoin="round"/><path d="M7.5 1.9L6.1 6.3L16.5 6.6M17.7 11.9L14.2 8.7L9.4 17.5M3.8 15.4L8.4 15L3.1 6.2" stroke="#ffffff" stroke-width="1.6" fill="none" stroke-linejoin="miter"/></svg>
<svg class="abs" style="left:520px;top:495px" width="16" height="18" viewBox="520 495 16 18"><path d="M528 496.8a5.2 5.2 0 0 1 3.2 9.3 c-0.5 0.5-0.7 0.9-0.7 1.4h-5c0-0.5-0.2-0.9-0.7-1.4a5.2 5.2 0 0 1 3.2-9.3z" fill="#f0a732"/><path d="M524.8 508.6H531.2M525.8 510.7H530.2" stroke="#d4d4d4" stroke-width="1.1" fill="none"/></svg>
<svg class="abs" style="left:549px;top:428px" width="26" height="14" viewBox="0 0 26 14"><path d="M3.6 1.2L5.6 2L9.4 1.9L10.9 4.2L10 5.8L11.7 8.7L10.3 10.5L8.4 10.7L6.8 12.9L4.4 12L3.6 10.5L1.1 10.4L0.2 8L1.1 6.4L0.1 4.2L2.5 3.1Z" fill="#6a6a6a"/><path d="M2.9 4H9.7M2.4 5.2L5 10.6L2.6 10.4M9.6 5.8L6.4 6.8L4.5 11.2" stroke="#2b2b2b" stroke-width="1" fill="none"/><path d="M16.1 5.3L19.1 8.5L22.1 5.3" stroke="#c2c2c2" stroke-width="1.5" fill="none"/></svg>
<svg class="abs" style="left:1664px;top:50px" width="144" height="20" viewBox="1664 50 144 20">
<path d="M1674 53L1680.3 64.2H1667.7Z" fill="#d9a41c"/><path d="M1674 56.6V60.6M1674 61.7V63.1" stroke="#2b2b2b" stroke-width="1.6"/>
<path d="M1711 53L1717.3 64.2H1704.7Z" fill="#7a735c"/><path d="M1711 56.6V60.6M1711 61.7V63.1" stroke="#2b2b2b" stroke-width="1.6"/>
<path d="M1742.8 59.2L1746.2 62.2L1752.4 54.8" stroke="#3fa650" stroke-width="2.4" fill="none"/><path d="M1742.2 65.8L1744.4 63.8L1746.6 65.8L1748.8 63.8L1751 65.8L1753.2 63.8" stroke="#3fa650" stroke-width="1" fill="none"/>
<path d="M1775 61L1779 57L1783 61" stroke="#b4b4b4" stroke-width="1.3" fill="none"/>
<path d="M1796 57.4L1800 61.4L1804 57.4" stroke="#b4b4b4" stroke-width="1.3" fill="none"/>
<text x="1683.5" y="64" font-family="Liberation Sans, sans-serif" font-size="11.5" font-weight="bold" fill="#bbbbbb">12</text>
<text x="1720" y="64" font-family="Liberation Sans, sans-serif" font-size="11.5" font-weight="bold" fill="#bbbbbb">45</text>
<text x="1757" y="64" font-family="Liberation Sans, sans-serif" font-size="11.5" font-weight="bold" fill="#bbbbbb">8</text>
</svg>
<div class="abs" style="left:1798px;top:88px;width:10px;height:48px;background:#766f59"></div>
<div class="abs" style="left:1798px;top:254px;width:10px;height:2px;background:#857d66"></div>
<div class="abs" style="left:1798px;top:470px;width:10px;height:2px;background:#857d66"></div>
<div class="abs" style="left:1798px;top:642px;width:10px;height:2px;background:#857d66"></div>
<div class="abs" style="left:1798px;top:648px;width:10px;height:2px;background:#857d66"></div>
<div class="abs" style="left:1798px;top:654px;width:10px;height:2px;background:#857d66"></div>
<div class="abs" style="left:1798px;top:660px;width:10px;height:2px;background:#857d66"></div>
<div class="abs" style="left:1798px;top:666px;width:10px;height:2px;background:#857d66"></div>
<div class="abs" style="left:1798px;top:677px;width:10px;height:2px;background:#857d66"></div>
<div class="abs" style="left:1798px;top:683px;width:10px;height:2px;background:#857d66"></div>
<div class="abs" style="left:1798px;top:833px;width:10px;height:2px;background:#857d66"></div>
<div class="abs" style="left:1798px;top:858px;width:10px;height:2px;background:#857d66"></div>
<div class="abs" style="left:1798px;top:877px;width:10px;height:2px;background:#857d66"></div>
<div class="abs" style="left:1798px;top:888px;width:10px;height:2px;background:#857d66"></div>
<div class="abs" style="left:1798px;top:399px;width:10px;height:2px;background:#d9a41c"></div>
<div class="abs" style="left:1798px;top:523px;width:10px;height:2px;background:#d9a41c"></div>
<div class="abs" style="left:1798px;top:774px;width:10px;height:2px;background:#d9a41c"></div>
<div class="abs" style="left:1798px;top:791px;width:10px;height:2px;background:#d9a41c"></div>
<div class="abs" style="left:1798px;top:795px;width:10px;height:2px;background:#d9a41c"></div>
<div class="abs" style="left:1798px;top:843px;width:10px;height:2px;background:#d9a41c"></div>
<div class="abs" style="left:1798px;top:892px;width:10px;height:2px;background:#d9a41c"></div>
<div class="abs" style="left:1798px;top:896px;width:10px;height:2px;background:#d9a41c"></div>
<div class="abs" style="left:1798px;top:927px;width:10px;height:2px;background:#d9a41c"></div>
<div class="abs" style="left:1798px;top:949px;width:10px;height:2px;background:#d9a41c"></div>
<div class="abs" style="left:1803px;top:965px;width:5px;height:34px;background:#505050"></div>
<div class="abs" style="left:536px;top:490px;width:1025px;height:131px;box-sizing:border-box;border:5px solid #8fd33c;border-radius:6px"></div>
</body>
</html>
